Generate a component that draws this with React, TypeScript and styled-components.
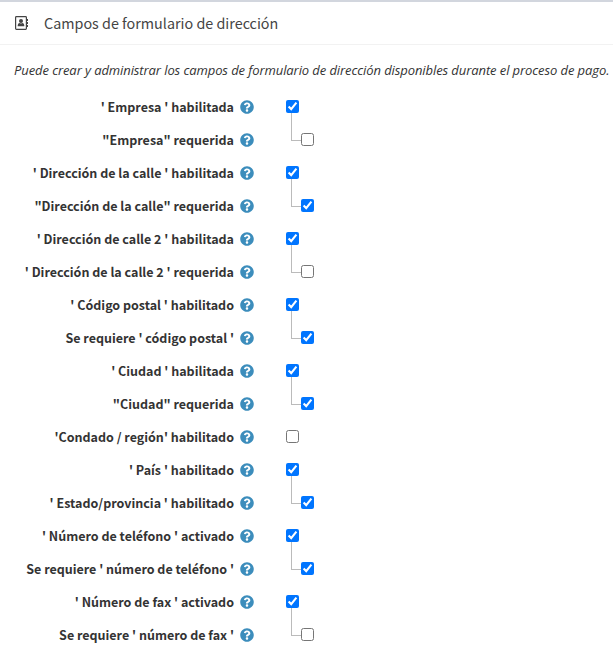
import React from "react";
import styled, { createGlobalStyle } from "styled-components";
import { FaQuestionCircle } from "react-icons/fa";

const GlobalStyle = createGlobalStyle`
  *, *::before, *::after { box-sizing: border-box; }
  body {
    margin: 0;
    background: #fff;
    color: #333;
    font-family: "Noto Sans CJK SC", "Open Sans", sans-serif;
  }
`;

const Card = styled.section`
  width: 613px;
  height: 656px;
  overflow: hidden;
  border-top: 2px solid #d2d6de;
`;

const CardHeader = styled.header`
  display: flex;
  align-items: center;
  height: 43px;
  padding: 0 14px;
  gap: 15px;
  border-bottom: 1px solid #f2f2f2;

  svg { flex: none; color: #444; }
`;

const Title = styled.h3`
  margin: 0;
  font-size: 14.35px;
  line-height: 20px;
  font-weight: 400;
  color: #444;
  white-space: nowrap;
`;

const Intro = styled.p`
  margin: 15px 0 10px 14px;
  font-family: "Open Sans", sans-serif;
  font-size: 13px;
  line-height: 20px;
  font-style: italic;
  letter-spacing: -0.09px;
  white-space: nowrap;
`;

const Row = styled.div`
  display: grid;
  grid-template-columns: 234px 20px 1fr;
  align-items: center;
  height: 33px;
`;

const Label = styled.label`
  text-align: right;
  font-size: 12.5px;
  line-height: 20px;
  font-weight: 700;
  white-space: nowrap;
`;

const Help = styled.span`
  display: flex;
  justify-content: flex-end;
  color: #3c8dbc;
`;

const Field = styled.div<{ $nested: boolean }>`
  display: flex;
  align-items: center;
  height: 33px;
  padding-left: ${(p) => (p.$nested ? 37 : 32)}px;
`;

const Branch = styled.span`
  align-self: flex-start;
  width: 10px;
  height: 28px;
  margin-top: -10px;
  border: solid #bbb;
  border-width: 0 0 1px 1px;
`;

const Check = styled.input`
  flex: none;
  width: 13px;
  height: 13px;
  margin: 0 0 1px;
`;

function AddressBookIcon() {
  return (
    <svg width="15" height="14" viewBox="0 0 15 14" fill="currentColor" aria-hidden="true">
      <rect x="1.6" y="0.6" width="10.8" height="12.8" rx="0.8" fill="none" stroke="currentColor" strokeWidth="1.2" />
      <circle cx="7" cy="5" r="2" />
      <path d="M3.7 10.3V9.2Q3.7 7.3 5.4 7.1Q7 8 8.6 7.1Q10.3 7.3 10.3 9.2V10.3Z" />
      <path d="M13 3h1v2h-1zM13 6h1v2h-1zM13 9h1v2h-1z" />
    </svg>
  );
}

type FieldRow = { label: string; checked: boolean; nested?: boolean };

const fields: FieldRow[] = [
  { label: "' Empresa ' habilitada", checked: true },
  { label: '"Empresa" requerida', checked: false, nested: true },
  { label: "' Dirección de la calle ' habilitada", checked: true },
  { label: '"Dirección de la calle" requerida', checked: true, nested: true },
  { label: "' Dirección de calle 2 ' habilitada", checked: true },
  { label: "' Dirección de la calle 2 ' requerida", checked: false, nested: true },
  { label: "' Código postal ' habilitado", checked: true },
  { label: "Se requiere ' código postal '", checked: true, nested: true },
  { label: "' Ciudad ' habilitada", checked: true },
  { label: '"Ciudad" requerida', checked: true, nested: true },
  { label: "'Condado / región' habilitado", checked: false },
  { label: "' País ' habilitado", checked: true },
  { label: "' Estado/provincia ' habilitado", checked: true, nested: true },
  { label: "' Número de teléfono ' activado", checked: true },
  { label: "Se requiere ' número de teléfono '", checked: true, nested: true },
  { label: "' Número de fax ' activado", checked: true },
  { label: "Se requiere ' número de fax '", checked: false, nested: true },
];

export default function App() {
  return (
    <>
      <GlobalStyle />
      <Card>
        <CardHeader>
          <AddressBookIcon />
          <Title>Campos de formulario de dirección</Title>
        </CardHeader>
        <Intro>
          Puede crear y administrar los campos de formulario de dirección disponibles durante el proceso de pago.
        </Intro>
        {fields.map(({ label, checked, nested = false }, i) => (
          <Row key={label}>
            <Label htmlFor={`field-${i}`}>{label}</Label>
            <Help><FaQuestionCircle size={14} /></Help>
            <Field $nested={nested}>
              {nested && <Branch />}
              <Check id={`field-${i}`} type="checkbox" defaultChecked={checked} />
            </Field>
          </Row>
        ))}
      </Card>
    </>
  );
}
